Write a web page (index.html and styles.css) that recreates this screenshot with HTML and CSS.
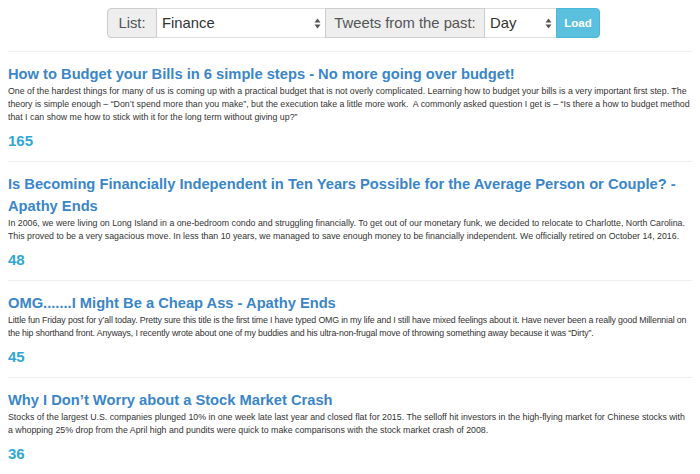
FILE: index.html
```html
<!DOCTYPE html>
<html lang="en">
<head>
	<meta charset="UTF-8">
	<title>Tweets</title>
	<link rel="stylesheet" href="styles.css">
</head>
<body>
	<div class="toolbar">
		<span class="addon first">List:</span>
		<div class="select list-select">Finance
			<svg class="arrows" width="7" height="11" viewBox="0 0 7 11"><path d="M3.5 0.5L6.5 4.5H0.5Z M3.5 10.5L0.5 6.5H6.5Z" fill="#555"/></svg>
		</div>
		<span class="addon past">Tweets from the past:</span>
		<div class="select day-select">Day
			<svg class="arrows" width="7" height="11" viewBox="0 0 7 11"><path d="M3.5 0.5L6.5 4.5H0.5Z M3.5 10.5L0.5 6.5H6.5Z" fill="#555"/></svg>
		</div>
		<button class="load">Load</button>
	</div>

	<div class="post">
		<h3><a href="#">How to Budget your Bills in 6 simple steps - No more going over budget!</a></h3>
		<p>One of the hardest things for many of us is coming up with a practical budget that is not overly complicated. Learning how to budget your bills is a very important first step. The theory is simple enough – “Don’t spend more than you make”, but the execution take a little more work.&nbsp; A commonly asked question I get is – “Is there a how to budget method that I can show me how to stick with it for the long term without giving up?”</p>
		<div class="count">165</div>
	</div>

	<div class="post">
		<h3><a href="#">Is Becoming Financially Independent in Ten Years Possible for the Average Person or Couple? - Apathy Ends</a></h3>
		<p>In 2006, we were living on Long Island in a one-bedroom condo and struggling financially. To get out of our monetary funk, we decided to relocate to Charlotte, North Carolina. This proved to be a very sagacious move. In less than 10 years, we managed to save enough money to be financially independent. We officially retired on October 14, 2016.</p>
		<div class="count">48</div>
	</div>

	<div class="post">
		<h3><a href="#">OMG.......I Might Be a Cheap Ass - Apathy Ends</a></h3>
		<p class="tight">Little fun Friday post for y’all today. Pretty sure this title is the first time I have typed OMG in my life and I still have mixed feelings about it. Have never been a really good Millennial on the hip shorthand front. Anyways, I recently wrote about one of my buddies and his ultra-non-frugal move of throwing something away because it was “Dirty”.</p>
		<div class="count">45</div>
	</div>

	<div class="post">
		<h3><a href="#">Why I Don’t Worry about a Stock Market Crash</a></h3>
		<p>Stocks of the largest U.S. companies plunged 10% in one week late last year and closed flat for 2015. The selloff hit investors in the high-flying market for Chinese stocks with a whopping 25% drop from the April high and pundits were quick to make comparisons with the stock market crash of 2008.</p>
		<div class="count">36</div>
	</div>
</body>
</html>
```

FILE: styles.css
```css
* { box-sizing: border-box; }
body { margin: 8px; font-family: "Liberation Sans", Arial, sans-serif; color: #333; background: #fff; }

.toolbar { display: flex; height: 30px; padding-left: 99px; margin-bottom: 13px; font-size: 14.8px; color: #555; }
.addon { display: flex; align-items: center; justify-content: center; background: #eee; border: 1px solid #ccc; }
.addon.first { border-radius: 4px 0 0 4px; width: 50px; }
.addon.past { width: 160px; }
.select { position: relative; display: flex; align-items: center; padding-left: 5px; background: #fff; border: 1px solid #ddd; border-left: none; border-right: none; color: #333; }
.list-select { width: 168px; }
.day-select { width: 71px; }
.arrows { position: absolute; right: 4px; top: 9px; }
.load { width: 44px; height: 30px; border: 1px solid #46b8da; background: #5bc0de; color: #fff; font-family: inherit; font-weight: bold; font-size: 11.5px; border-radius: 0 4px 4px 0; padding: 0; }

.post { border-top: 1px solid #eee; padding: 11px 0 10px; }
.post h3 { margin: 0; font-size: 14.7px; line-height: 22px; font-weight: bold; }
.post h3 a { color: #3a86c8; text-decoration: none; }
.post p { margin: 0; font-size: 8.8px; line-height: 13px; }
.post p.tight { letter-spacing: -0.15px; }
.count { margin-top: 7px; font-size: 15px; line-height: 20px; font-weight: bold; color: #2fa8d5; }
```
